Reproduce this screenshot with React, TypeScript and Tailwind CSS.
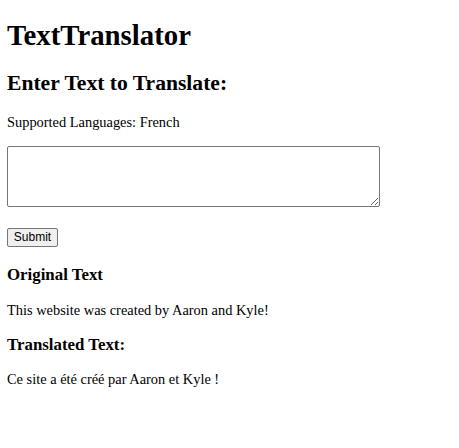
export default function App() {
  return (
    <div className="min-h-[448px] bg-white px-[7px] pt-[18.8px] font-['Liberation_Serif','Times_New_Roman',serif] text-black">
      <h1 className="text-[28.8px] font-bold leading-[33px]">TextTranslator</h1>
      <h2 className="mt-[19.4px] text-[21.6px] font-bold leading-[25px]">Enter Text to Translate:</h2>
      <p className="mt-[18.1px] text-[14.4px] leading-[17px]">Supported Languages: French</p>

      <form onSubmit={(e) => e.preventDefault()}>
        <textarea className="mt-[14.7px] block h-[61px] w-[373px] rounded-[2px] border border-[#767676] bg-white" />
        <button
          type="submit"
          className="mt-[21px] block h-[19px] w-[51px] rounded-[2px] border border-[#767676] bg-[#efefef] font-['Liberation_Sans',Arial,sans-serif] text-[12px] leading-[15px] text-black"
        >
          Submit
        </button>
      </form>

      <h3 className="mt-[18.5px] text-[16.85px] font-bold leading-[19px]">Original Text</h3>
      <p className="mt-[17.1px] text-[14.4px] leading-[17px]">This website was created by Aaron and Kyle!</p>
      <h3 className="mt-[16.2px] text-[16.85px] font-bold leading-[19px]">Translated Text:</h3>
      <p className="mt-[16.8px] text-[14.4px] leading-[17px]">Ce site a été créé par Aaron et Kyle !</p>
    </div>
  );
}
